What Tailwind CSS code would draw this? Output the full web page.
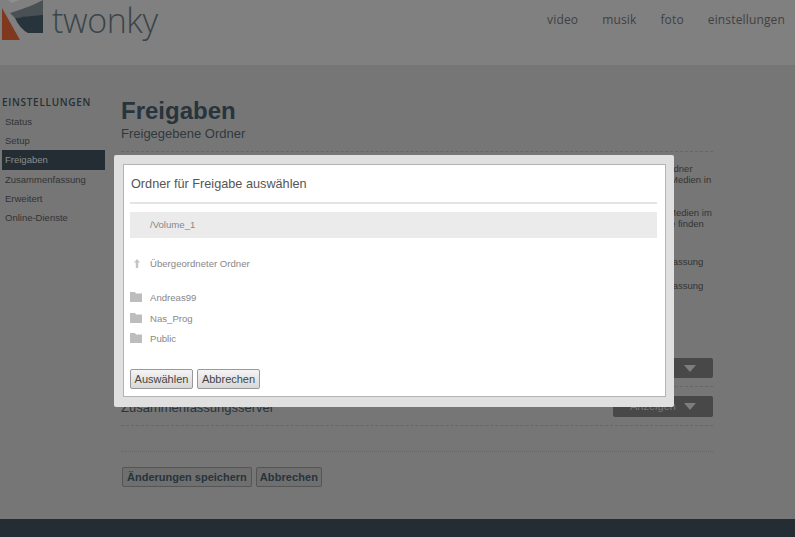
<!DOCTYPE html>
<html lang="de">
<head>
<meta charset="UTF-8">
<title>twonky</title>
<script src="https://cdn.jsdelivr.net/npm/@tailwindcss/browser@4"></script>
</head>
<body class="relative h-[537px] w-[795px] overflow-hidden bg-[#767676] font-['Liberation_Sans',sans-serif] text-[#2f3a40]">
  <!-- header -->
  <header class="flex h-[65px] justify-between bg-[#808080]">
    <div class="flex items-start">
      <svg class="h-[42px] w-[46px] shrink-0" viewBox="0 0 46 42">
        <path d="M2 8 L20 40 L2 40 Z" fill="#80391f"/>
        <path d="M8 0 L19 0 L12 3 Z" fill="#8f8f8f"/>
        <path d="M10 13 Q26 8 35 4 L43 0 L43 16 Q28 16 15 18 Z" fill="#4a5155"/>
        <path d="M15 18 Q28 16 43 15 L43 33 L28 33 Q20 29 15 18 Z" fill="#27343b"/>
      </svg>
      <span class="ml-[6px] font-['Open_Sans',sans-serif] text-[34px] leading-[40px] font-light tracking-[-0.4px] text-[#3a4549]">twonky</span>
    </div>
    <nav class="mr-[10px] mt-[11px] flex h-[18px] gap-6 font-['Open_Sans',sans-serif] text-[12px] leading-[18px] tracking-[0.15px] text-[#404040]">
      <span>video</span><span>musik</span><span>foto</span><span>einstellungen</span>
    </nav>
  </header>

  <main class="flex h-[454px]">
    <!-- sidebar -->
    <aside class="ml-[2px] mt-[30px] w-[103px] text-[9.5px]">
      <h2 class="mb-[3px] font-['Open_Sans',sans-serif] text-[10px] leading-[14px] font-semibold tracking-[0.7px] text-[#262f34]">EINSTELLUNGEN</h2>
      <ul class="leading-[19.2px] text-[#333]">
        <li class="pl-[3px]">Status</li>
        <li class="pl-[3px]">Setup</li>
        <li class="bg-[#232d33] pl-[3px] text-[#8a8f92]">Freigaben</li>
        <li class="pl-[3px]">Zusammenfassung</li>
        <li class="pl-[3px]">Erweitert</li>
        <li class="pl-[3px]">Online-Dienste</li>
      </ul>
    </aside>

    <!-- content under the dialog -->
    <section class="ml-[16px] mt-[32px] flex w-[592px] flex-col">
      <h1 class="text-[24px] leading-[27px] font-bold text-[#27343b]">Freigaben</h1>
      <p class="mt-[2px] text-[13px] leading-[16px]">Freigegebene Ordner</p>
      <div class="mt-[9px] border-t border-dashed border-[#666]"></div>
      <div class="ml-[544px] mt-[11px] w-[50px] text-[9.5px] leading-[11px] text-[#333]">
        <p class="ml-[-2px]">Ordner</p><p class="ml-[5px]">Medien in</p>
      </div>
      <div class="ml-[544px] mt-[22px] w-[50px] text-[9.5px] leading-[11px] text-[#333]">
        <p class="ml-[3px]">Medien im</p><p class="ml-[5px]">e finden</p>
      </div>
      <p class="ml-[549px] mt-[27px] text-[9.5px] leading-[11px] text-[#333]">fassung</p>
      <p class="ml-[549px] mt-[13px] text-[9.5px] leading-[11px] text-[#333]">fassung</p>
      <div class="mt-[67px] flex h-[20px] justify-end">
        <div class="flex w-[100px] items-center justify-end rounded-[2px] bg-[#484848] pr-[17px]">
          <span class="border-x-[6px] border-t-[7px] border-x-transparent border-t-[#7d7d7d]"></span>
        </div>
      </div>
      <div class="mt-[8px] border-t border-dashed border-[#666]"></div>
      <div class="mt-[9px] flex h-[21px] items-center justify-between">
        <span class="mt-[2px] text-[13px] text-[#27343b]">Zusammenfassungsserver</span>
        <div class="flex w-[100px] items-center justify-between rounded-[2px] bg-[#484848] pl-[17px] pr-[17px]">
          <span class="text-[11px] leading-[21px] text-[#777]">Anzeigen</span>
          <span class="border-x-[6px] border-t-[7px] border-x-transparent border-t-[#7d7d7d]"></span>
        </div>
      </div>
      <div class="mt-[8px] border-t border-dashed border-[#666]"></div>
      <div class="mt-[25px] border-t border-dotted border-[#666]"></div>
      <div class="ml-[1px] mt-[15px] flex gap-[4px] text-[11px] font-bold text-[#27343b]">
        <span class="flex h-[20px] items-center rounded-[2px] border border-[#555] bg-[#6f6f6f] px-[4px]">Änderungen speichern</span>
        <span class="flex h-[20px] items-center rounded-[2px] border border-[#555] bg-[#6f6f6f] px-[3px] tracking-[0.1px]">Abbrechen</span>
      </div>
    </section>
  </main>

  <footer class="h-[18px] bg-[#232d33]"></footer>

  <!-- dialog -->
  <div class="absolute left-[114px] top-[155px] h-[252px] w-[560px] rounded-[2px] bg-[#e0e0e0] p-[9px] pr-[8px]">
    <div class="flex h-[233px] flex-col border border-[#b4b4b4] bg-white pl-[6px] pr-[8px]">
      <h3 class="mt-[10px] ml-[1px] text-[12.7px] leading-[18px] text-[#555]">Ordner für Freigabe auswählen</h3>
      <div class="mt-[9px] border-t-2 border-[#e4e4e4]"></div>
      <div class="mt-[8px] flex h-[26px] items-center bg-[#ebebeb] pl-[20px] text-[9.6px] text-[#888]">/Volume_1</div>
      <div class="mt-[20px] flex h-[12px] items-center text-[9.6px] text-[#888]">
        <svg class="ml-[4px] mr-[10px] h-[10px] w-[6px]" viewBox="0 0 6 10"><path d="M3 0 L6 3.5 L4.2 3.5 L4.2 9 L1.8 9 L1.8 3.5 L0 3.5 Z" fill="#c4c4c4"/></svg>
        <span>Übergeordneter Ordner</span>
      </div>
      <ul class="mt-[18px] text-[9.6px] text-[#888]">
        <li class="flex h-[21px] items-center gap-[8px]">
          <svg class="mt-[-3px] h-[10px] w-[12px]" viewBox="0 0 12 10"><path d="M0 0 H5 L6 1.5 H12 V10 H0 Z" fill="#bdbdbd"/></svg><span>Andreas99</span>
        </li>
        <li class="flex h-[20px] items-center gap-[8px]">
          <svg class="mt-[-3px] h-[10px] w-[12px]" viewBox="0 0 12 10"><path d="M0 0 H5 L6 1.5 H12 V10 H0 Z" fill="#bdbdbd"/></svg><span>Nas_Prog</span>
        </li>
        <li class="flex h-[20px] items-center gap-[8px]">
          <svg class="mt-[-3px] h-[10px] w-[12px]" viewBox="0 0 12 10"><path d="M0 0 H5 L6 1.5 H12 V10 H0 Z" fill="#bdbdbd"/></svg><span>Public</span>
        </li>
      </ul>
      <div class="mt-[20px] flex gap-[4px] text-[11px] text-[#444]">
        <span class="flex h-[20px] w-[63px] items-center justify-center rounded-[2px] border border-[#999] bg-gradient-to-b from-[#f4f4f4] to-[#d8d8d8]">Auswählen</span>
        <span class="flex h-[20px] w-[63px] items-center justify-center rounded-[2px] border border-[#999] bg-gradient-to-b from-[#f4f4f4] to-[#d8d8d8]">Abbrechen</span>
      </div>
    </div>
  </div>
</body>
</html>
